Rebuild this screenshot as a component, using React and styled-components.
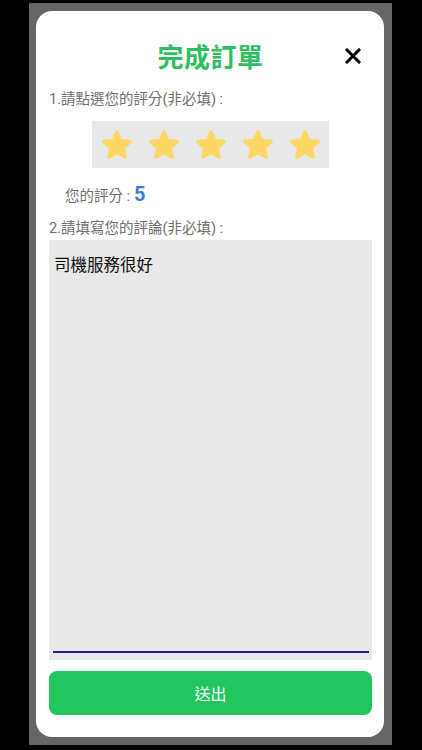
import React from "react";
import styled, { createGlobalStyle } from "styled-components";

const Global = createGlobalStyle`
  html, body { margin: 0; padding: 0; background: #000; }
  body { font-family: Roboto, "Noto Sans CJK TC", sans-serif; }
  * { box-sizing: border-box; }
`;

const Screen = styled.div`
  width: 422px;
  height: 750px;
  background: #000;
  padding: 3px 30px 5px 29px;
`;

const Frame = styled.div`
  width: 363px;
  height: 742px;
  background: #666;
  padding: 8px 8px 8px 7px;
`;

const Card = styled.div`
  width: 348px;
  height: 726px;
  background: #fff;
  border-radius: 16px;
  padding: 30px 12px 22px 13px;
  display: flex;
  flex-direction: column;
`;

const Header = styled.div`
  height: 30px;
  display: grid;
  grid-template-columns: 1fr auto 1fr;
  align-items: center;
`;

const Title = styled.h1`
  grid-column: 2;
  margin: 0;
  font-family: "Noto Sans CJK TC", sans-serif;
  font-weight: 700;
  font-size: 26px;
  line-height: 30px;
  color: #2fbf60;
  letter-spacing: 0.5px;
`;

const Close = styled.button`
  grid-column: 3;
  justify-self: end;
  margin-right: 10px;
  width: 18px;
  height: 18px;
  padding: 0;
  border: none;
  background: none;
  display: flex;
  align-items: center;
  justify-content: center;
`;

const Label = styled.div`
  margin-top: ${(p) => p.$mt}px;
  font-family: Roboto, "Noto Sans CJK TC", sans-serif;
  font-size: 14.5px;
  line-height: 20px;
  color: #707070;
`;

const StarBox = styled.div`
  align-self: center;
  margin-top: 11px;
  width: 237px;
  height: 47px;
  background: #e8e8e8;
  display: flex;
  align-items: center;
  justify-content: center;
`;

const StarCell = styled.div`
  width: 47px;
  height: 47px;
  display: flex;
  align-items: center;
  justify-content: center;
`;

const ScoreRow = styled.div`
  margin-top: 14px;
  padding-left: 16px;
  height: 24px;
  display: flex;
  align-items: center;
  gap: 4px;
  font-size: 14.5px;
  color: #707070;
`;

const ScoreValue = styled.span`
  font-family: Roboto, sans-serif;
  font-weight: 700;
  font-size: 20px;
  color: #3b7ddd;
`;

const FieldBox = styled.div`
  margin-top: 1px;
  height: 420px;
  background: #e8e8e8;
  padding: 0 3px 7px 4px;
  display: flex;
`;

const TextArea = styled.textarea`
  flex: 1;
  resize: none;
  border: none;
  border-bottom: 2px solid #2d1a8c;
  outline: none;
  background: transparent;
  padding: 12px 1px 0;
  font-family: "Noto Sans CJK TC", sans-serif;
  font-size: 16.5px;
  line-height: 24px;
  color: #111;
`;

const Submit = styled.button`
  margin-top: 11px;
  height: 44px;
  border: none;
  border-radius: 8px;
  background: #22c55e;
  color: #fff;
  font-family: "Noto Sans CJK TC", sans-serif;
  font-size: 16px;
`;

const STAR =
  "M12 17.27l4.15 2.51c.76.46 1.69-.22 1.49-1.08l-1.1-4.72 3.67-3.18c.67-.58.31-1.68-.57-1.75l-4.83-.41-1.89-4.46c-.34-.81-1.5-.81-1.84 0L9.19 8.63l-4.83.41c-.88.07-1.24 1.17-.57 1.75l3.67 3.18-1.1 4.72c-.2.86.73 1.54 1.49 1.08l4.15-2.5z";

const Star = () => (
  <svg width="42" height="42" viewBox="0 0 24 24">
    <path d={STAR} fill="#fdd663" />
  </svg>
);

export default function App() {
  return (
    <>
      <Global />
      <Screen>
        <Frame>
          <Card>
            <Header>
              <Title>完成訂單</Title>
              <Close aria-label="close">
                <svg width="16" height="16" viewBox="0 0 16 16">
                  <path d="M2 2L14 14M14 2L2 14" stroke="#000" strokeWidth="3" strokeLinecap="square" />
                </svg>
              </Close>
            </Header>
            <Label $mt={19}>1.請點選您的評分(非必填) :</Label>
            <StarBox>
              {[0, 1, 2, 3, 4].map((i) => (
                <StarCell key={i}>
                  <Star />
                </StarCell>
              ))}
            </StarBox>
            <ScoreRow>
              <span>您的評分 :</span>
              <ScoreValue>5</ScoreValue>
            </ScoreRow>
            <Label $mt={13}>2.請填寫您的評論(非必填) :</Label>
            <FieldBox>
              <TextArea defaultValue="司機服務很好" />
            </FieldBox>
            <Submit>送出</Submit>
          </Card>
        </Frame>
      </Screen>
    </>
  );
}
